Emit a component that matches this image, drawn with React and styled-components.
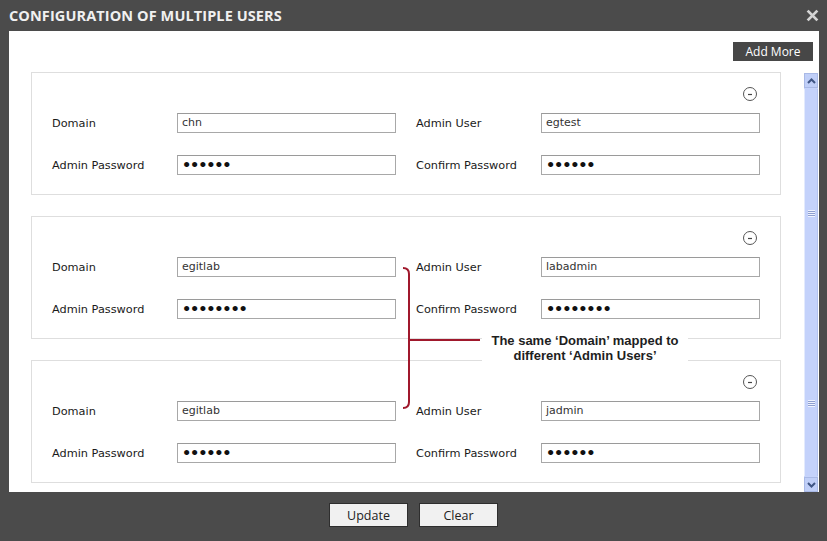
import React from "react";
import styled, { createGlobalStyle } from "styled-components";

const GlobalStyle = createGlobalStyle`
  html, body {
    margin: 0;
    padding: 0;
    background: #4b4b4b;
  }
`;

const users = [
  { domain: "chn", user: "egtest", pass: 6 },
  { domain: "egitlab", user: "labadmin", pass: 8 },
  { domain: "egitlab", user: "jadmin", pass: 6 },
];

const Dialog = styled.div`
  width: 827px;
  height: 541px;
  background: #4b4b4b;
  display: flex;
  flex-direction: column;
  font-family: "DejaVu Sans", Verdana, sans-serif;
`;

const TitleBar = styled.div`
  height: 31px;
  flex: none;
  display: flex;
  align-items: center;
  justify-content: space-between;
  padding: 0 9px 0 9px;
  box-sizing: border-box;
`;

const Title = styled.h1`
  margin: 0;
  font-family: "Open Sans", sans-serif;
  font-weight: 700;
  font-size: 14.5px;
  color: #f0f0f0;
  letter-spacing: 0.1px;
`;

const Close = styled.svg`
  width: 13px;
  height: 13px;
  margin-right: -1px;
`;

const Body = styled.div`
  position: relative;
  margin: 0 8px 0 9px;
  height: 461px;
  flex: none;
  background: #fff;
  display: flex;
  flex-direction: column;
`;

const Toolbar = styled.div`
  height: 41px;
  flex: none;
  display: flex;
  justify-content: flex-end;
  align-items: flex-start;
  padding: 11px 6px 0 0;
  box-sizing: border-box;
`;

const AddMore = styled.button`
  width: 80px;
  height: 19px;
  border: none;
  background: #474747;
  color: #fff;
  font-family: "Open Sans", sans-serif;
  font-size: 12px;
  padding: 0;
  line-height: 19px;
`;

const ScrollArea = styled.div`
  flex: 1;
  display: flex;
`;

const List = styled.div`
  flex: 1;
  padding: 0 23px 0 22px;
  display: flex;
  flex-direction: column;
  gap: 21px;
`;

const Card = styled.div`
  height: 123px;
  box-sizing: border-box;
  border: 1px solid #dedede;
  padding: 13px 20px 19px;
`;

const CardHead = styled.div`
  height: 16px;
  display: flex;
  justify-content: flex-end;
  align-items: center;
`;

const MinusIcon = styled.svg`
  width: 16px;
  height: 16px;
  margin-right: 2px;
`;

const FormGrid = styled.div`
  margin-top: 11px;
  display: grid;
  grid-template-columns: repeat(2, 344px);
  column-gap: 20px;
  row-gap: 22px;
`;

const FieldRow = styled.div`
  display: grid;
  grid-template-columns: 125px 219px;
  align-items: center;
`;

const Label = styled.span`
  font-size: 11.3px;
  color: #1a1a1a;
  padding-top: 1px;
`;

const Field = styled.div`
  height: 20px;
  box-sizing: border-box;
  border: 1px solid #a8a8a8;
  border-top-color: #9a9a9a;
  padding: 0 4px;
  font-size: 11px;
  line-height: 18px;
  color: #333;
  background: #fff;
  overflow: hidden;
  white-space: nowrap;
`;

const Dots = styled.span`
  font-size: 14.5px;
  letter-spacing: -1.2px;
  color: #111;
  font-weight: 700;
`;

const Scrollbar = styled.div`
  width: 15px;
  margin: 1px 1px 0 0;
  display: flex;
  flex-direction: column;
  background: #c6d4fb;
`;

const ArrowBox = styled.div`
  height: 15px;
  flex: none;
  box-sizing: border-box;
  border: 1px solid #a9b9e6;
  background: #c0cff8;
  display: flex;
  align-items: center;
  justify-content: center;
`;

const Thumb = styled.div`
  flex: 1;
  margin: 1px 0;
  border-left: 1px solid #e3eafd;
  border-right: 1px solid #b2c2ef;
  background: #c4d2fb;
  display: flex;
  flex-direction: column;
  justify-content: space-between;
  align-items: center;
  padding: 121px 0 69px;
`;

const Grip = styled.div`
  width: 7px;
  height: 7px;
  background: repeating-linear-gradient(
    to bottom,
    #eef2fe 0 1px,
    #8e9fd0 1px 2px
  );
`;

const Footer = styled.div`
  flex: 1;
  display: flex;
  justify-content: center;
  gap: 11px;
  padding-top: 11px;
`;

const FooterButton = styled.button`
  width: 79px;
  height: 24px;
  border: 1px solid #2e2e2e;
  background: #f1f1f1;
  font-family: "Open Sans", sans-serif;
  font-size: 12.5px;
  color: #222;
  padding: 0;
`;

const Bracket = styled.svg`
  position: absolute;
  left: 389px;
  top: 231px;
  width: 92px;
  height: 152px;
`;

const Note = styled.div`
  position: absolute;
  left: 473px;
  top: 301px;
  width: 206px;
  height: 30px;
  background: #fff;
  font-family: "Liberation Sans", Arial, sans-serif;
  font-weight: 700;
  font-size: 13px;
  line-height: 15px;
  color: #1e1e1e;
  text-align: center;
  padding-top: 1px;
  box-sizing: border-box;
  white-space: nowrap;
`;

function Chevron({ up }) {
  return (
    <svg width="9" height="6" viewBox="0 0 9 6">
      <path
        d={up ? "M1 5 L4.5 1.5 L8 5" : "M1 1 L4.5 4.5 L8 1"}
        fill="none"
        stroke="#3f5584"
        strokeWidth="2"
      />
    </svg>
  );
}

function UserCard({ domain, user, pass }) {
  const dots = "•".repeat(pass);
  return (
    <Card>
      <CardHead>
        <MinusIcon viewBox="0 0 16 16">
          <circle cx="8" cy="8" r="6.5" fill="none" stroke="#555" strokeWidth="1" />
          <line x1="6" y1="8.5" x2="10" y2="8.5" stroke="#444" strokeWidth="1.2" />
        </MinusIcon>
      </CardHead>
      <FormGrid>
        <FieldRow>
          <Label>Domain</Label>
          <Field>{domain}</Field>
        </FieldRow>
        <FieldRow>
          <Label>Admin User</Label>
          <Field>{user}</Field>
        </FieldRow>
        <FieldRow>
          <Label>Admin Password</Label>
          <Field><Dots>{dots}</Dots></Field>
        </FieldRow>
        <FieldRow>
          <Label>Confirm Password</Label>
          <Field><Dots>{dots}</Dots></Field>
        </FieldRow>
      </FormGrid>
    </Card>
  );
}

export default function App() {
  return (
    <>
      <GlobalStyle />
      <Dialog>
        <TitleBar>
          <Title>CONFIGURATION OF MULTIPLE USERS</Title>
          <Close viewBox="0 0 12 12">
            <path d="M1.5 1.5 L10.5 10.5 M10.5 1.5 L1.5 10.5" stroke="#d4d4d4" strokeWidth="2.6" />
          </Close>
        </TitleBar>
        <Body>
          <Toolbar>
            <AddMore>Add More</AddMore>
          </Toolbar>
          <ScrollArea>
            <List>
              {users.map((u, i) => (
                <UserCard key={i} {...u} />
              ))}
            </List>
            <Scrollbar>
              <ArrowBox><Chevron up /></ArrowBox>
              <Thumb>
                <Grip />
                <Grip />
              </Thumb>
              <ArrowBox><Chevron /></ArrowBox>
            </Scrollbar>
          </ScrollArea>
          <Bracket viewBox="0 0 92 152">
            <path
              d="M5 6 Q11 6 11 12 L11 140 Q11 146 5 146 M11 78 L82 78"
              fill="none"
              stroke="#a0182c"
              strokeWidth="2"
            />
          </Bracket>
          <Note>
            The same ‘Domain’ mapped to
            <br />
            different ‘Admin Users’
          </Note>
        </Body>
        <Footer>
          <FooterButton>Update</FooterButton>
          <FooterButton>Clear</FooterButton>
        </Footer>
      </Dialog>
    </>
  );
}
